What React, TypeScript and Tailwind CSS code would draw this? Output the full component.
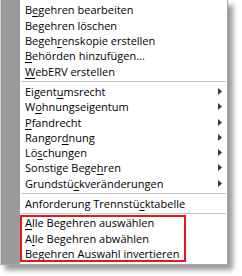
import React from 'react';

type Item = {
  label: string;
  key: number; // index of the mnemonic letter
  sub?: boolean;
};

const groupA: Item[] = [
  { label: 'Begehren bearbeiten', key: 1 },
  { label: 'Begehren löschen', key: 2 },
  { label: 'Begehrenskopie erstellen', key: 5 },
  { label: 'Behörden hinzufügen...', key: 0 },
  { label: 'WebERV erstellen', key: 0 },
];

const groupB: Item[] = [
  { label: 'Eigentumsrecht', key: 6, sub: true },
  { label: 'Wohnungseigentum', key: 1, sub: true },
  { label: 'Pfandrecht', key: 0, sub: true },
  { label: 'Rangordnung', key: 6, sub: true },
  { label: 'Löschungen', key: 2, sub: true },
  { label: 'Sonstige Begehren', key: 13, sub: true },
  { label: 'Grundstückveränderungen', key: 8, sub: true },
];

const groupC: Item[] = [{ label: 'Anforderung Trennstücktabelle', key: 20 }];

const groupD: Item[] = [
  { label: 'Alle Begehren auswählen', key: 0 },
  { label: 'Alle Begehren abwählen', key: 1 },
  { label: 'Begehren Auswahl invertieren', key: 23 },
];

const Arrow = () => (
  <svg width="4" height="7" viewBox="0 0 4 7" className="shrink-0">
    <path d="M0 0 L4 3.5 L0 7 Z" fill="#3a3a3a" />
  </svg>
);

const MenuRow: React.FC<{ item: Item }> = ({ item }) => {
  const { label, key } = item;
  return (
    <div className="h-[15.3px] flex items-center justify-between pl-[5px] pr-[5px] text-[11px] leading-none text-black whitespace-nowrap">
      <span>
        {label.slice(0, key)}
        <span className="underline underline-offset-2">{label.charAt(key)}</span>
        {label.slice(key + 1)}
      </span>
      {item.sub && <Arrow />}
    </div>
  );
};

const Separator: React.FC<{ h?: string }> = ({ h = 'h-[5px]' }) => (
  <div className={`${h} flex items-center pl-px pr-px`}>
    <div className="h-px w-full bg-[#c9c9c9]" />
  </div>
);

export default function App() {
  return (
    <div
      className="w-[242px] h-[276px] bg-white overflow-hidden"
      style={{ fontFamily: '"Open Sans", "Noto Sans", sans-serif' }}
    >
      <div className="w-[228px] h-[265px] flex bg-white border border-t-0 border-l-[#d4d4d4] border-r-[#a8a8a8] border-b-[#a8a8a8] shadow-[5px_5px_5px_rgba(0,0,0,0.4)]">
        {/* gray icon column */}
        <div className="w-[19px] bg-[#9b9b9b]" />

        {/* items */}
        <div className="flex-1 flex flex-col pt-[2.35px]">
          {groupA.map((it) => (
            <MenuRow key={it.label} item={it} />
          ))}
          <Separator />
          {groupB.map((it) => (
            <MenuRow key={it.label} item={it} />
          ))}
          <Separator />
          {groupC.map((it) => (
            <MenuRow key={it.label} item={it} />
          ))}
          <Separator h="h-[4px]" />
          <div className="relative">
            {groupD.map((it) => (
              <MenuRow key={it.label} item={it} />
            ))}
            <div className="absolute left-0 -top-[0.5px] -bottom-[1px] w-[166px] border-2 border-[#e8151b]" />
          </div>
        </div>
      </div>
    </div>
  );
}
